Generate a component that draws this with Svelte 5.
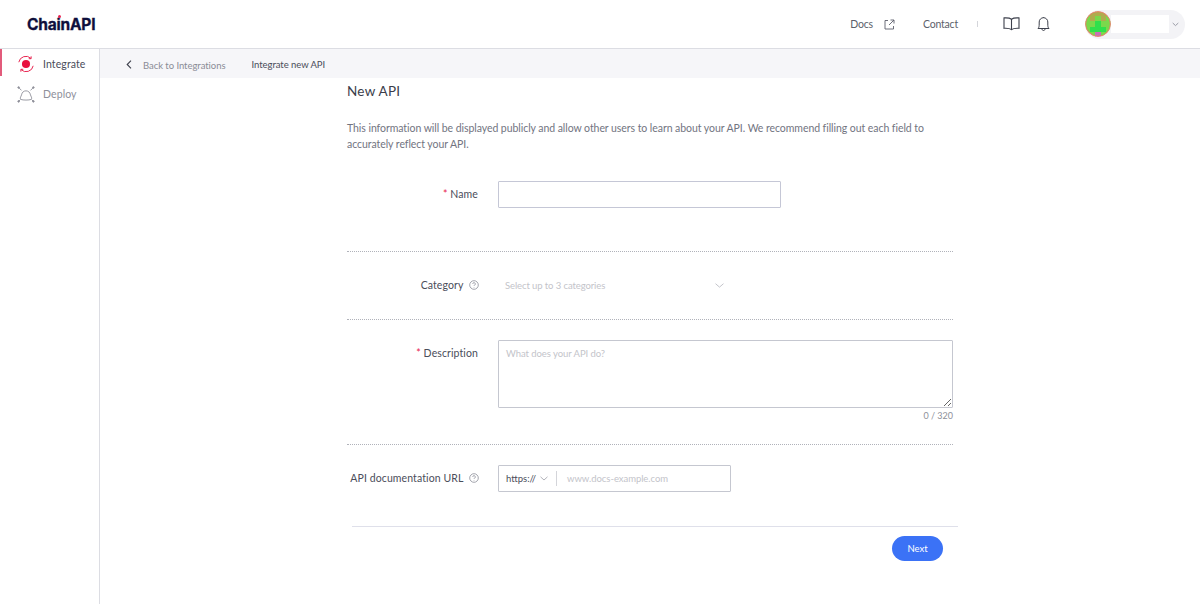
<script>
  const g = '#7bd84c', o = '#b0ab4e', b = '#2fe04c', m = '#c76fb4';
  const cells = [
    [o, o, o, o, o],
    [g, o, g, o, g],
    [g, g, b, g, g],
    [g, b, b, b, g],
    [o, g, m, g, o]
  ];
</script>

<div class="page">
  <header class="top">
    <div class="logo">Cha<span class="i">i<span class="dot"></span></span>nAPI</div>
    <nav class="nav">
      <a class="link docs">Docs
        <svg width="11" height="11" viewBox="0 0 11 11" fill="none" stroke="#5c5f6b" stroke-width="0.9"><path d="M4 1.500H1v8.500h8.500V7M5 6l5-5M6.500 1H10v3.500"/></svg>
      </a>
      <a class="link contact">Contact</a>
      <span class="sep"></span>
      <svg class="book" width="17" height="14" viewBox="0 0 17 14" fill="none" stroke="#3d404c" stroke-width="1.100"><path d="M8.500 2.200C7 1 4 .7 1 .9v10.400c3-.2 6 .1 7.500 1.400 1.500-1.300 4.500-1.600 7.500-1.400V.9c-3-.2-6 .1-7.500 1.300zM8.500 2.200v10.500"/></svg>
      <svg class="bell" width="13" height="16" viewBox="0 0 13 16" fill="none" stroke="#3d404c" stroke-width="1"><path d="M1 12.500c1-1 1.200-2 1.200-4.500V6a4.300 4.300 0 0 1 8.600 0v2c0 2.500.2 3.500 1.200 4.500zM5 13c0 2 3 2 3 0M6.500 1v.7"/></svg>
      <div class="user">
        <svg class="avatar" width="26" height="26" viewBox="0 0 26 26">
          <defs><clipPath id="av"><circle cx="13" cy="13" r="12.500"/></clipPath></defs>
          <g clip-path="url(#av)" shape-rendering="crispEdges">
            {#each cells as row, y}
              {#each row as c, x}
                <rect x={x * 5.2} y={y * 5.2} width="5.300" height="5.300" fill={c}/>
              {/each}
            {/each}
          </g>
          <circle cx="13" cy="13" r="12.400" fill="none" stroke="#e8806a" stroke-width="1"/>
        </svg>
        <span class="name"></span>
        <svg class="chev-user" width="7" height="5" viewBox="0 0 7 5" fill="none" stroke="#9a9ca6" stroke-width="1"><path d="M.7 1l2.800 2.600L6.300 1"/></svg>
      </div>
    </nav>
  </header>

  <div class="body">
    <aside class="side">
      <div class="item active">
        <svg width="18" height="18" viewBox="0 0 20 20" fill="none" stroke="#e8234f" stroke-width="1.100">
          <circle cx="10" cy="10" r="4.500" fill="#e8123f" stroke="none"/>
          <path d="M2 8A8 8 0 0 1 15.500 3.800M18 12A8 8 0 0 1 4.500 16.200M15.700 1.500v2.600h-2.600M4.300 18.500v-2.600h2.600"/>
        </svg>
        <span>Integrate</span>
      </div>
      <div class="item">
        <svg width="18" height="18" viewBox="0 0 20 20" fill="none" stroke="#8e909a" stroke-width="1">
          <path d="M4 16c-1-2 .5-3 1-5 .6-3 2.500-4.500 5-4.500s4.400 1.500 5 4.500c.5 2 2 3 1 5-3 1-9 1-12 0zM2 3l3 3M18 3l-3 3M2 18l1.500-1.500M18 18l-1.500-1.500"/>
          <circle cx="1.800" cy="2.800" r="0.900" fill="#8e909a"/><circle cx="18.200" cy="2.800" r="0.900" fill="#8e909a"/><circle cx="1.800" cy="18.200" r="0.900" fill="#8e909a"/><circle cx="18.200" cy="18.200" r="0.900" fill="#8e909a"/>
        </svg>
        <span>Deploy</span>
      </div>
    </aside>

    <main class="main">
      <div class="crumbs">
        <svg class="back" width="6" height="9" viewBox="0 0 6 9" fill="none" stroke="#3d404c" stroke-width="1.100"><path d="M5 .7L1.200 4.500 5 8.300"/></svg>
        <span class="back-text">Back to Integrations</span>
        <span class="current">Integrate new API</span>
      </div>

      <div class="form">
        <h1>New API</h1>
        <p class="intro">This information will be displayed publicly and allow other users to learn about your API. We recommend filling out each field to accurately reflect your API.</p>

        <div class="row row-name">
          <label class="lab" for="n"><span class="req">*</span> Name</label>
          <input id="n" class="text-in" />
        </div>
        <div class="dots d1"></div>

        <div class="row row-cat">
          <span class="lab with-help">Category
            <svg class="help" width="10" height="10" viewBox="0 0 10 10" fill="none" stroke="#7d808b" stroke-width="0.7"><circle cx="5" cy="5" r="4.300"/><path d="M3.700 3.900a1.300 1.300 0 1 1 1.900 1.200c-.4.200-.6.400-.6.900M5 7.300v.5"/></svg>
          </span>
          <div class="select">
            <span>Select up to 3 categories</span>
            <svg width="9" height="5" viewBox="0 0 9 5" fill="none" stroke="#c3c4ca" stroke-width="1"><path d="M.5.700l4 3.400 4-3.400"/></svg>
          </div>
        </div>
        <div class="dots d2"></div>

        <div class="row row-desc">
          <label class="lab" for="d"><span class="req">*</span> Description</label>
          <div class="ta-wrap">
            <textarea id="d" placeholder="What does your API do?"></textarea>
            <div class="count">0 / 320</div>
          </div>
        </div>
        <div class="dots d3"></div>

        <div class="row row-url">
          <span class="lab with-help">API documentation URL
            <svg class="help" width="10" height="10" viewBox="0 0 10 10" fill="none" stroke="#7d808b" stroke-width="0.7"><circle cx="5" cy="5" r="4.300"/><path d="M3.700 3.900a1.300 1.300 0 1 1 1.900 1.200c-.4.200-.6.400-.6.900M5 7.300v.5"/></svg>
          </span>
          <div class="url">
            <span class="proto">https://</span>
            <svg class="proto-chev" width="8" height="5" viewBox="0 0 8 5" fill="none" stroke="#a8aab2" stroke-width="0.9"><path d="M.5.800L4 4 7.500.800"/></svg>
            <span class="bar"></span>
            <span class="ph">www.docs-example.com</span>
          </div>
        </div>

        <div class="foot">
          <button class="next">Next</button>
        </div>
      </div>
    </main>
  </div>
</div>

<style>
  :global(body) { margin: 0; background: #fff; }
  .page { width: 1200px; height: 604px; overflow: hidden; font-family: Lato, "Open Sans", sans-serif; color: #4a4d5a; }
  .top { height: 48px; border-bottom: 1px solid #dcdde3; display: flex; align-items: center; justify-content: space-between; }
  .logo { margin-left: 27px; font: 700 15.500px Inter, sans-serif; color: #0f0f3c; letter-spacing: -0.200px; -webkit-text-stroke: 0.300px #0f0f3c; }
  .i { position: relative; }
  .dot { position: absolute; left: 1px; top: 0; width: 3.500px; height: 3.500px; border-radius: 50%; background: #e8234f; }
  .nav { display: flex; align-items: center; }
  .link { font-size: 10.500px; color: #5c5f6b; letter-spacing: -0.200px; display: flex; align-items: center; padding-bottom: 1px; }
  .docs svg { margin-left: 11px; margin-top: 1px; }
  .contact { margin-left: 28px; }
  .sep { width: 1px; height: 6px; background: #d4d5da; margin-left: 19px; }
  .book { margin-left: 25px; }
  .bell { margin-left: 17px; }
  .user { margin-left: 35px; margin-right: 15px; width: 100px; height: 29px; border-radius: 15px; background: #f3f3f6; display: flex; align-items: center; }
  .avatar { display: block; }
  .name { width: 58px; height: 18px; background: #fff; }
  .chev-user { margin-left: 3px; }
  .body { display: flex; height: 555px; }
  .side { width: 99px; border-right: 1px solid #dcdde3; }
  .item { height: 30px; display: flex; align-items: center; padding: 0 0 0 17px; gap: 8px; font-size: 10.500px; letter-spacing: 0.100px; color: #8e909a; box-sizing: border-box; }
  .item.active { color: #4a4d5a; position: relative; }
  .item.active::before { content: ""; position: absolute; left: 0; top: 0; bottom: 3px; width: 1.500px; background: #e25b7b; }
  .main { flex: 1; }
  .crumbs { height: 29px; background: #f6f6f9; display: flex; align-items: center; padding-left: 26px; padding-top: 1px; box-sizing: border-box; }
  .back { margin-right: 11px; }
  .back-text { font-size: 9.500px; color: #8a8c96; letter-spacing: -0.050px; padding-top: 2px; }
  .current { margin-left: 26px; font-size: 9.500px; color: #4a4d5a; letter-spacing: -0.050px; }
  .form { margin-left: 247px; width: 606px; }
  h1 { margin: 4px 0 0; font-weight: 400; font-size: 13.500px; line-height: 18px; letter-spacing: 0.250px; color: #3a3d4a; }
  .intro { margin: 20px 0 0; font-size: 10.500px; line-height: 16px; color: #72747f; letter-spacing: -0.060px; }
  .row { display: flex; }
  .lab { width: 131px; text-align: right; font-size: 10.500px; letter-spacing: 0.100px; color: #4a4d5a; line-height: 14px; flex: none; white-space: nowrap; margin-right: 20px; }
  .lab.with-help { width: 132px; margin-right: 19px; }
  .req { color: #e8234f; }
  .help { vertical-align: -1px; margin-left: 3px; }
  .row-name { margin-top: 29px; }
  .row-name .lab { padding-top: 6px; }
  .text-in { box-sizing: border-box; width: 283px; height: 27px; border: 1px solid #c5c7d6; border-radius: 1px; outline: none; background: #fff; padding: 0; }
  .dots { border-top: 1px dotted #b0b2ba; }
  .d1 { margin-top: 43px; }
  .row-cat { margin-top: 25px; height: 16px; align-items: center; }
  .select { display: flex; align-items: center; justify-content: space-between; width: 219px; padding-left: 7px; font-size: 9.500px; letter-spacing: -0.100px; color: #c3c4ca; }
  .d2 { margin-top: 26px; }
  .row-desc { margin-top: 20px; }
  .row-desc .lab { padding-top: 6px; }
  .ta-wrap { width: 455px; }
  textarea { display: block; box-sizing: border-box; width: 455px; height: 68px; border: 1px solid #c5c7d0; border-radius: 1px; padding: 7px 7px; font: 9.500px Lato, sans-serif; letter-spacing: -0.060px; outline: none; }
  textarea::placeholder { color: #c3c4ca; opacity: 1; }
  .count { text-align: right; font-size: 9px; line-height: 14px; padding-top: 1px; color: #8e909a; }
  .d3 { margin-top: 21px; }
  .row-url { margin-top: 20px; }
  .row-url .lab { padding-top: 6px; }
  .url { box-sizing: border-box; width: 233px; height: 27px; border: 1px solid #c5c7d0; border-radius: 1px; display: flex; align-items: center; padding-left: 7px; }
  .proto { font-size: 9.500px; color: #4a4d5a; }
  .proto-chev { margin-left: 4px; }
  .bar { width: 1px; height: 15px; background: #d4d5da; margin-left: 8px; }
  .ph { margin-left: 10px; font-size: 9.500px; color: #c3c4ca; letter-spacing: -0.050px; }
  .foot { margin-top: 34px; margin-left: 5px; width: 606px; border-top: 1px solid #dfe0ea; height: 34px; display: flex; justify-content: flex-end; align-items: flex-end; }
  .next { width: 51px; height: 25px; margin-right: 15px; border: none; border-radius: 13px; background: #3b72f6; color: #fff; font: 9.500px Lato, sans-serif; padding: 0; }
</style>
